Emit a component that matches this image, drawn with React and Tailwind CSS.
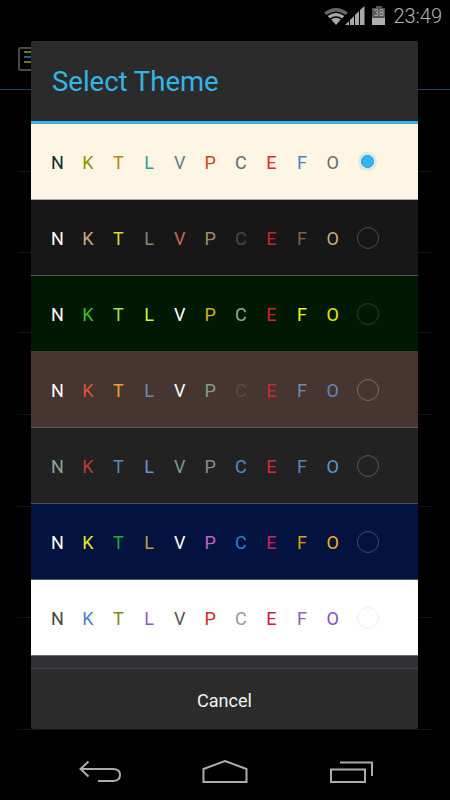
import React from 'react';

const themes = [
  { bg: 'bg-[#fef5e5]', line: 'border-[#a8a59c]', ring: '', selected: true,
    colors: ['#0b2b2e', '#859900', '#b58900', '#2aa198', '#657b83', '#cb4b16', '#5f6e72', '#dc2a30', '#3f87c9', '#5f6e72'] },
  { bg: 'bg-[#171717]', line: 'border-[#5c5c56]', ring: 'border-[#4c4c4c]',
    colors: ['#ffffff', '#c8a880', '#d7d73a', '#8a8470', '#c06a50', '#a68a64', '#484848', '#cf2030', '#7a6347', '#c8aa7d'] },
  { bg: 'bg-[#011802]', line: 'border-[#3a3a36]', ring: 'border-[#2c4027]',
    colors: ['#ffffff', '#3fc21a', '#9de33a', '#d0f040', '#ffffff', '#d5b01c', '#9aa88a', '#cf2030', '#f5f51a', '#e6ea10'] },
  { bg: 'bg-[#463531]', line: 'border-[#5c5856]', ring: 'border-[#7a6a66]',
    colors: ['#ffffff', '#dd5a30', '#f0a030', '#6f8cae', '#ffffff', '#7fa088', '#654636', '#c92a3a', '#6f8cae', '#6488b8'] },
  { bg: 'bg-[#222222]', line: 'border-[#4c5056]', ring: 'border-[#585858]',
    colors: ['#8aa898', '#bb3b30', '#5a88b8', '#6a96c4', '#7a9c88', '#8a8a8a', '#4f8cc8', '#d42a3a', '#5a88b8', '#5a98d0'] },
  { bg: 'bg-[#03123e]', line: 'border-[#4c5468]', ring: 'border-[#3c4a72]',
    colors: ['#ffffff', '#e8e820', '#20b030', '#c89848', '#ffffff', '#c860c8', '#2a80c8', '#d0205a', '#e89a10', '#f0b010'] },
  { bg: 'bg-[#ffffff]', line: 'border-[#6a6a6a]', ring: 'border-[#f0f0f0]',
    colors: ['#444444', '#4a80d8', '#7c8a10', '#8a60b0', '#555555', '#d02828', '#999999', '#cc2040', '#8a60b0', '#8a50b8'] },
];

const letters = ['N', 'K', 'T', 'L', 'V', 'P', 'C', 'E', 'F', 'O'];

// dividers of the list behind the dialog
const behindRows = ['h-[82px]', 'h-[81px]', 'h-[80px]', 'h-[82px]', 'h-[92px]', 'h-[111px]', 'h-[112px]'];

function Wifi() {
  return (
    <svg width="24" height="18" viewBox="0 0 24 18" className="text-[#a8a8a8]">
      <path d="M0 5.5 Q12 -3.5 24 5.5 L21.6 8 Q12 1 2.4 8 Z" fill="#666" />
      <path d="M3.6 9 Q12 3 20.4 9 L18 11.4 Q12 7.2 6 11.4 Z" fill="currentColor" />
      <path d="M7.2 12.4 Q12 9 16.8 12.4 L12 18 Z" fill="currentColor" />
    </svg>
  );
}

function Signal() {
  return (
    <svg width="20" height="19" viewBox="0 0 20 19">
      <path d="M0 19 L4 15 V19 Z" fill="#a8a8a8" />
      <path d="M5 14 L9 10 V19 H5 Z" fill="#a8a8a8" />
      <path d="M10 9 L14 5 V19 H10 Z" fill="#a8a8a8" />
      <path d="M15 4 L19.5 0 V19 H15 Z" fill="#a8a8a8" />
    </svg>
  );
}

function Battery() {
  return (
    <div className="flex w-[13px] flex-col items-center">
      <div className="h-[2px] w-[6px] bg-[#555]" />
      <div className="flex h-[10px] w-[13px] items-center justify-center bg-[#555] text-[9px] leading-none text-[#bbb]">38</div>
      <div className="h-[7px] w-[13px] bg-[#b0b0b0]" />
    </div>
  );
}

function Radio({ theme }) {
  return (
    <div className="ml-[9px] flex size-[22px] items-center justify-center">
      {theme.selected ? (
        <div className="size-[13px] rounded-full border border-[#2c94c8] bg-[#33b5f0] shadow-[0_0_0_3px_rgba(51,181,229,0.18)]" />
      ) : (
        <div className={`size-[22px] rounded-full border ${theme.ring}`} />
      )}
    </div>
  );
}

function ThemeRow({ theme }) {
  return (
    <div className={`flex h-[76px] items-center border-b pl-[11px] ${theme.bg} ${theme.line}`}>
      {letters.map((l, i) => (
        <span key={l} className="w-[30.6px] pt-[2px] text-center text-[18px] leading-none" style={{ color: theme.colors[i] }}>
          {l}
        </span>
      ))}
      <Radio theme={theme} />
    </div>
  );
}

export default function App() {
  return (
    <div className="relative flex h-[800px] w-[450px] flex-col overflow-hidden bg-black font-['Roboto',sans-serif]">
      <div className="flex h-[25px] items-center justify-end pr-[8px] pt-[6px]">
        <Wifi />
        <div className="-ml-[3px]"><Signal /></div>
        <div className="ml-[7px]"><Battery /></div>
        <span className="ml-[8px] text-[20px] font-light leading-none text-[#b4b4b4]">23:49</span>
      </div>

      {/* screen behind the dialog */}
      <div className="flex h-[65px] items-center border-b border-[#1f4060] pl-[18px] pt-[4px]">
        <div className="flex h-[24px] w-[30px] flex-col gap-[3px] rounded-[2px] border-2 border-[#4a4a4a] px-[4px] py-[2px]">
          <div className="h-[2px] bg-[#6d7a1c]" />
          <div className="h-[2px] bg-[#2a5a8a]" />
          <div className="h-[2px] bg-[#6d7a1c]" />
        </div>
      </div>
      <div className="mx-[18px] flex-1 overflow-hidden">
        {behindRows.map((h, i) => (
          <div key={i} className={`${h} border-b border-[#141414]`} />
        ))}
      </div>

      <div className="flex h-[70px] items-start pt-[30px] pl-[78px]">
        <svg width="44" height="24" viewBox="78 760 44 24" fill="none" stroke="#acacac" strokeWidth="2">
          <path d="M88.5 761.5 L80.5 769 L88.5 776.5" />
          <path d="M80.5 769 H113 Q120 769 120 775 Q120 781 113 781 H98" />
        </svg>
        <svg width="46" height="24" viewBox="202 759 46 24" fill="none" stroke="#acacac" strokeWidth="2" className="ml-[80px]">
          <path d="M203.5 781 V768 L225 760 L246.5 768 V781 Z" />
        </svg>
        <svg width="44" height="24" viewBox="330 759 44 24" fill="none" stroke="#acacac" strokeWidth="2" className="ml-[82px]">
          <path d="M331 768.5 H365 V781 H331 Z" />
          <path d="M340 761.5 H372 V775" />
        </svg>
      </div>

      {/* dialog */}
      <div className="absolute left-[31px] top-[41px] flex h-[688px] w-[387px] flex-col overflow-hidden rounded-[2px] bg-[#2b2b2b]">
        <div className="flex h-[80px] items-center pl-[21px] pt-[2px] text-[27.5px] leading-none text-[#33b5e5]">Select Theme</div>
        <div className="h-[3px] bg-[#33b5e5]" />
        {themes.map((t, i) => (
          <ThemeRow key={i} theme={t} />
        ))}
        <div className="h-[12px] bg-[#303236]" />
        <div className="h-[1px] bg-[#464646]" />
        <div className="flex flex-1 items-center justify-center pt-[3px] text-[18px] leading-none text-[#f2f2f2]">Cancel</div>
      </div>
    </div>
  );
}
